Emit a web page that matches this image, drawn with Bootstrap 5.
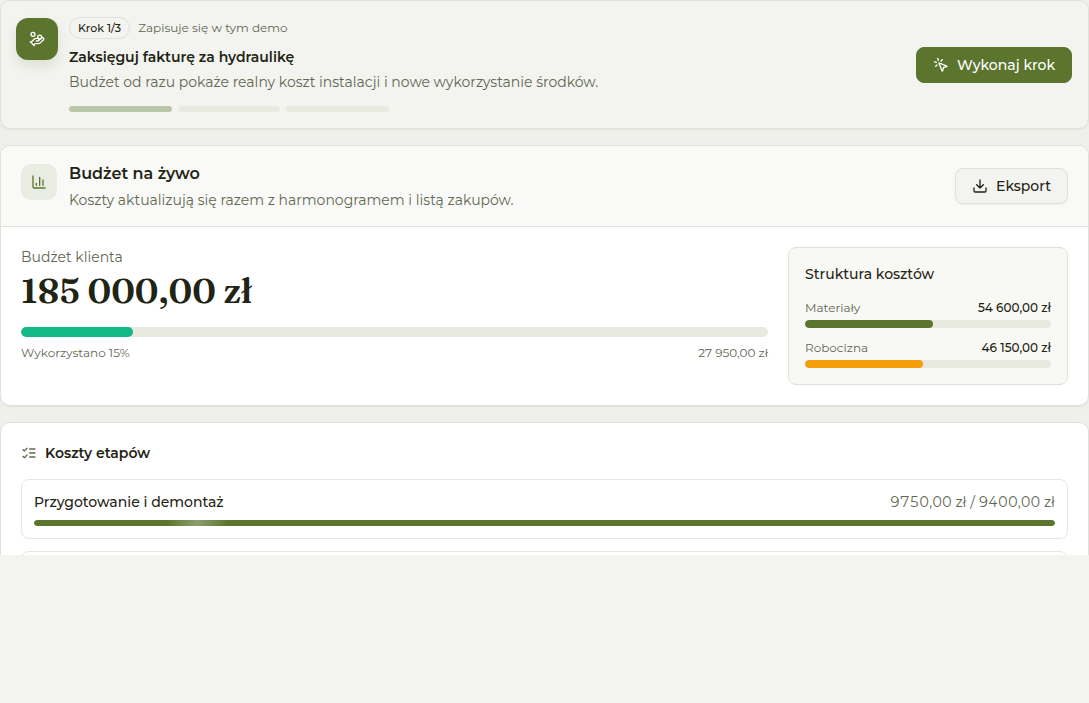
<!DOCTYPE html>
<html lang="pl">
<head>
<meta charset="utf-8">
<meta name="viewport" content="width=device-width, initial-scale=1">
<title>Budżet na żywo</title>
<link href="https://cdn.jsdelivr.net/npm/bootstrap@5.3.0/dist/css/bootstrap.min.css" rel="stylesheet">
<style>
  :root { --olive: #5b752e; --ink: #1f2414; --muted: #616753; --line: #dfe2d8; --track: #e8eae0; }
  body { background: #f3f4f0; color: var(--ink); font-family: Montserrat, Inter, sans-serif; font-size: 14px; line-height: 20px; }
  svg { fill: none; stroke: currentColor; stroke-width: 2; stroke-linecap: round; stroke-linejoin: round; flex: none; }
  h2, h3, p { margin: 0; }
  .pane { background: #eff0eb; max-height: 79vh; overflow: hidden; }
  .panel { border: 1px solid var(--line); border-radius: 10px; background: #fff; box-shadow: 0 1px 2px rgba(50, 60, 30, .06); overflow: hidden; }
  .panel-step { background: #f3f4f0; padding: 16px 16px 16px 15px; }
  .panel-head { background: #f9faf7; border-bottom: 1px solid var(--line); padding: 16px 20px; }
  .panel-stages { padding: 20px; }
  .soft { color: var(--muted); }
  .lead-text { line-height: 24px; margin-top: 3px; }
  .fig { font-size: 12px; line-height: 16px; }
  .tabular { font-variant-numeric: tabular-nums; }
  .title { font-size: 14px; line-height: 20px; font-weight: 600; }
  .title-lg { font-size: 16px; line-height: 24px; font-weight: 600; }
  .step-row { gap: 11px; }
  .head-row { gap: 12px; }
  .tile { width: 42px; height: 42px; border-radius: 12px; background: var(--olive); color: #fff; box-shadow: 0 6px 12px rgba(91, 117, 46, .15); margin-top: 1px; }
  .tile-soft { width: 36px; height: 36px; border-radius: 10px; background: #e9ece3; color: var(--olive); margin-top: 2px; }
  .chip { border: 1px solid var(--line); border-radius: 20px; padding: 2px 8px; font-size: 11px; line-height: 16px; font-weight: 500; }
  .steps { max-width: 320px; gap: 6px; margin-top: 12px; }
  .steps span { flex: 1; height: 6px; border-radius: 6px; background: var(--track); }
  .steps .done { background: #bac6a8; }
  .btn { --bs-btn-font-size: 14px; --bs-btn-line-height: 20px; --bs-btn-font-weight: 500; --bs-btn-padding-x: 16px; --bs-btn-padding-y: 7px; --bs-btn-border-radius: 8px; }
  .btn-olive { --bs-btn-color: #fff; --bs-btn-bg: var(--olive); --bs-btn-border-color: var(--olive); --bs-btn-hover-color: #fff; --bs-btn-hover-bg: #4c6326; }
  .btn-plain { --bs-btn-color: var(--ink); --bs-btn-bg: #f3f4f0; --bs-btn-border-color: var(--line); --bs-btn-hover-bg: #e9ece3; box-shadow: 0 1px 2px rgba(50, 60, 30, .06); }
  .total { font-family: Fraunces, "Liberation Serif", serif; font-size: 35px; line-height: 48px; font-weight: 600; }
  .progress { --bs-progress-bg: var(--track); --bs-progress-height: 8px; --bs-progress-border-radius: 8px; }
  .progress-bar { border-radius: 8px; background: var(--olive); }
  .progress.thick { --bs-progress-height: 10px; margin-top: 12px; }
  .progress.thin { --bs-progress-height: 6px; }
  .bar-green { background: #12b886; }
  .bar-amber { background: #f59e0b; }
  .bar-shine { background: linear-gradient(90deg, transparent 13%, rgba(255, 255, 255, .3) 16%, transparent 19%) var(--olive); }
  .budget { display: grid; grid-template-columns: 1fr 280px; gap: 20px; padding: 20px; }
  .split { border: 1px solid var(--line); border-radius: 8px; background: #f8f9f5; padding: 16px; }
  .split-rows { display: grid; gap: 12px; margin-top: 16px; }
  .stages { display: grid; gap: 12px; margin-top: 16px; }
  .stage { border: 1px solid #e5e7e0; border-radius: 8px; padding: 12px; }
</style>
</head>
<body>
<main class="pane d-flex flex-column gap-3">
  <section class="panel panel-step d-flex align-items-center justify-content-between gap-3 flex-shrink-0">
    <div class="step-row d-flex align-items-start">
      <div class="tile d-flex align-items-center justify-content-center flex-shrink-0">
        <svg width="16" height="16" viewBox="0 0 24 24"><path d="M11 15h2a2 2 0 1 0 0-4h-3c-.6 0-1.1.2-1.4.6L3 17M7 21l1.6-1.4c.3-.4.8-.6 1.4-.6h4c1.1 0 2.1-.4 2.8-1.2l4.6-4.4a2 2 0 0 0-2.75-2.91l-4.2 3.9M2 16l6 6"/><circle cx="16" cy="9" r="2.9"/><circle cx="6" cy="5" r="3"/></svg>
      </div>
      <div>
        <div class="d-flex align-items-center gap-2"><span class="chip">Krok 1/3</span><span class="fig soft">Zapisuje się w tym demo</span></div>
        <h2 class="title mt-2">Zaksięguj fakturę za hydraulikę</h2>
        <p class="lead-text soft">Budżet od razu pokaże realny koszt instalacji i nowe wykorzystanie środków.</p>
        <div class="steps d-flex"><span class="done"></span><span></span><span></span></div>
      </div>
    </div>
    <button type="button" class="btn btn-olive d-flex align-items-center gap-2 flex-shrink-0">
      <svg width="16" height="16" viewBox="0 0 24 24"><path d="M14 4.1 12 6M5.1 8l-2.9-.8M6 12l-1.9 2M7.2 2.2 8 5.1M9.037 9.69a.498.498 0 0 1 .653-.653l11 4.5a.5.5 0 0 1-.074.949l-4.349 1.041a1 1 0 0 0-.74.739l-1.04 4.35a.5.5 0 0 1-.95.074z"/></svg>
      <span>Wykonaj krok</span>
    </button>
  </section>

  <section class="panel flex-shrink-0">
    <header class="panel-head d-flex align-items-center justify-content-between gap-3">
      <div class="head-row d-flex align-items-start">
        <div class="tile-soft d-flex align-items-center justify-content-center flex-shrink-0">
          <svg width="16" height="16" viewBox="0 0 24 24"><path d="M3 3v16a2 2 0 0 0 2 2h16M8 17v-3M13 17V5M18 17V9"/></svg>
        </div>
        <div>
          <h2 class="title-lg">Budżet na żywo</h2>
          <p class="soft mt-1">Koszty aktualizują się razem z harmonogramem i listą zakupów.</p>
        </div>
      </div>
      <button type="button" class="btn btn-plain d-flex align-items-center gap-2 flex-shrink-0">
        <svg width="16" height="16" viewBox="0 0 24 24"><path d="M12 3v12M7 10l5 5 5-5M21 15v4a2 2 0 0 1-2 2H5a2 2 0 0 1-2-2v-4"/></svg>
        <span>Eksport</span>
      </button>
    </header>
    <div class="budget">
      <div>
        <p class="soft">Budżet klienta</p>
        <p class="total">185 000,00 zł</p>
        <div class="progress thick"><div class="progress-bar bar-green" style="width:15%"></div></div>
        <div class="fig soft d-flex justify-content-between mt-2"><span>Wykorzystano 15%</span><span>27 950,00 zł</span></div>
      </div>
      <div class="split">
        <h3 class="title fw-medium">Struktura kosztów</h3>
        <div class="split-rows">
          <div>
            <div class="fig d-flex justify-content-between"><span class="soft">Materiały</span><span class="fw-medium">54 600,00 zł</span></div>
            <div class="progress mt-1"><div class="progress-bar" style="width:52%"></div></div>
          </div>
          <div>
            <div class="fig d-flex justify-content-between"><span class="soft">Robocizna</span><span class="fw-medium">46 150,00 zł</span></div>
            <div class="progress mt-1"><div class="progress-bar bar-amber" style="width:48%"></div></div>
          </div>
        </div>
      </div>
    </div>
  </section>

  <section class="panel panel-stages flex-shrink-0">
    <h2 class="title d-flex align-items-center gap-2"><svg class="soft" width="16" height="16" viewBox="0 0 24 24"><path d="m3 17 2 2 4-4M3 7l2 2 4-4M13 6h8M13 12h8M13 18h8"/></svg>Koszty etapów</h2>
    <div class="stages">
      <div class="stage">
        <div class="d-flex justify-content-between"><span class="fw-medium">Przygotowanie i demontaż</span><span class="soft tabular">9750,00 zł / 9400,00 zł</span></div>
        <div class="progress thin mt-2"><div class="progress-bar bar-shine" style="width:100%"></div></div>
      </div>
      <div class="stage"><div class="progress thin"></div></div>
    </div>
  </section>
</main>
<script src="https://cdn.jsdelivr.net/npm/bootstrap@5.3.0/dist/js/bootstrap.bundle.min.js"></script>
</body>
</html>
